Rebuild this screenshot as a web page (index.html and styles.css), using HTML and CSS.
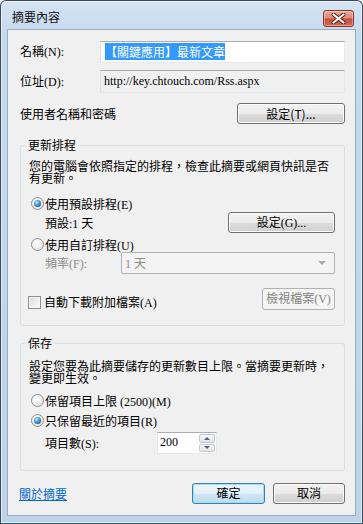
FILE: index.html
```html
<!DOCTYPE html>
<html lang="zh-Hant">
<head>
<meta charset="utf-8">
<title>摘要內容</title>
<link rel="stylesheet" href="styles.css">
</head>
<body>
<div class="window">
  <div class="titlebar">
    <span class="title">摘要內容</span>
    <span class="close" aria-label="關閉">
      <svg width="15" height="11" viewBox="0 0 15 11"><path d="M2.5 1.5 L12.5 9.5 M12.5 1.5 L2.5 9.5" stroke="#5a1c12" stroke-width="4" stroke-linecap="round"/><path d="M2.5 1.5 L12.5 9.5 M12.5 1.5 L2.5 9.5" stroke="#ffffff" stroke-width="2.2" stroke-linecap="round"/></svg>
    </span>
  </div>
  <div class="client">
    <div class="form-row row-name">
      <span class="lbl">名稱(N):</span>
      <div class="textbox"><span class="sel">【關鍵應用】最新文章</span></div>
    </div>
    <div class="form-row row-url">
      <span class="lbl">位址(D):</span>
      <div class="textbox readonly">http://key.chtouch.com/Rss.aspx</div>
    </div>
    <div class="user-row">
      <span>使用者名稱和密碼</span>
      <span class="btn btn-user">設定(T)...</span>
    </div>

    <fieldset class="group group-update">
      <legend>更新排程</legend>
      <p class="desc">您的電腦會依照指定的排程，檢查此摘要或網頁快訊是否有更新。</p>
      <div class="opt opt-first"><span class="radio on"></span><span>使用預設排程(E)</span></div>
      <div class="sub-row default-row">
        <span>預設:1 天</span>
        <span class="btn btn-g">設定(G)...</span>
      </div>
      <div class="opt opt-custom"><span class="radio"></span><span>使用自訂排程(U)</span></div>
      <div class="sub-row freq-row">
        <span class="freq-lbl disabled">頻率(F):</span>
        <div class="combo"><span class="disabled">1 天</span><span class="arrow"></span></div>
      </div>
      <div class="check-row">
        <div class="check-opt"><span class="checkbox"></span><span>自動下載附加檔案(A)</span></div>
        <span class="btn btn-disabled btn-view">檢視檔案(V)</span>
      </div>
    </fieldset>

    <fieldset class="group group-keep">
      <legend>保存</legend>
      <p class="desc">設定您要為此摘要儲存的更新數目上限。當摘要更新時，變更即生效。</p>
      <div class="opt opt-max"><span class="radio"></span><span>保留項目上限 (2500)(M)</span></div>
      <div class="opt opt-recent"><span class="radio on"></span><span>只保留最近的項目(R)</span></div>
      <div class="sub-row count-row">
        <span class="count-lbl">項目數(S):</span>
        <div class="spin">
          <span class="spin-val">200</span>
          <span class="spin-btns">
            <span class="spin-btn"><span class="tri-up"></span></span>
            <span class="spin-btn"><span class="tri-down"></span></span>
          </span>
        </div>
      </div>
    </fieldset>

    <div class="footer">
      <a class="link" href="#">關於摘要</a>
      <div class="footer-btns">
        <span class="btn btn-default btn-ok">確定</span>
        <span class="btn btn-cancel">取消</span>
      </div>
    </div>
  </div>
</div>
</body>
</html>
```

FILE: styles.css
```css
* { box-sizing: border-box; }

html, body {
  margin: 0;
  padding: 0;
  background: #ffffff;
}

body {
  font-family: "Liberation Serif", "Noto Sans CJK TC", serif;
  font-size: 12px;
  color: #000;
}

.window {
  width: 363px;
  height: 524px;
  border: 1px solid #3d4957;
  border-bottom-color: #2a5a6e;
  border-radius: 6px 6px 0 0;
  background: linear-gradient(to bottom, #d6e4f3 0, #c6daee 30px, #bdd3ea 100%);
  box-shadow: inset 0 0 0 1px rgba(255,255,255,0.55);
  display: flex;
  flex-direction: column;
}

.titlebar {
  height: 28px;
  display: flex;
  align-items: flex-start;
  padding: 8px 8px 0 11px;
}

.title {
  font-family: "Noto Sans CJK TC", sans-serif;
  font-size: 12px;
  line-height: 16px;
  color: #111;
}

.close {
  margin-left: auto;
  width: 31px;
  height: 17px;
  margin-top: 1px;
  border: 1px solid #8a3324;
  border-radius: 3px;
  background: linear-gradient(to bottom, #e9ab9c 0, #dc8b77 45%, #c8513a 55%, #d06a52 100%);
  box-shadow: inset 0 0 0 1px rgba(255,235,230,0.45);
  display: flex;
  align-items: center;
  justify-content: center;
}

.client {
  margin: 0 6px;
  height: 487px;
  border: 1px solid #9aabbf;
  background: #f0f0f0;
  padding: 0 10px 0 12px;
}

/* top form rows */
.form-row {
  display: grid;
  grid-template-columns: 80px 245px;
  align-items: center;
}
.row-name { margin-top: 11px; }
.row-url { margin-top: 7px; }

.lbl { line-height: 16px; }

.textbox {
  height: 22px;
  border: 1px solid #e3e9ef;
  border-top-color: #abadb3;
  border-left-color: #dbdfe6;
  background: #fff;
  padding: 2px 3px 0 4px;
  line-height: 16px;
  white-space: nowrap;
}
.textbox.readonly {
  background: #f0f0f0;
  height: 23px;
  padding-left: 3px;
}
.sel {
  background: #3399ff;
  color: #fff;
  font-family: "Noto Sans CJK TC", sans-serif;
}

.user-row {
  margin-top: 10px;
  display: flex;
  justify-content: space-between;
  align-items: center;
  font-family: "Noto Sans CJK TC", sans-serif;
}

/* buttons */
.btn {
  display: flex;
  align-items: center;
  justify-content: center;
  height: 21px;
  border: 1px solid #707070;
  border-radius: 3px;
  background: linear-gradient(to bottom, #f2f2f2 0, #ebebeb 50%, #dddddd 50%, #cfcfcf 100%);
  box-shadow: inset 0 0 0 1px #fcfcfc;
  line-height: 16px;
  white-space: nowrap;
}
.btn-user { width: 108px; }
.btn-g { width: 107px; }
.btn-disabled {
  border-color: #adb2b5;
  background: #f4f4f4;
  box-shadow: none;
  color: #838383;
}
.btn-view { width: 73px; height: 22px; }
.btn-default {
  border-color: #3c7fb1;
  box-shadow: inset 0 0 0 1px #9fdcf6;
  background: linear-gradient(to bottom, #eef6fb 0, #e1eff8 50%, #cfe6f4 50%, #bcdcef 100%);
}
.btn-ok { width: 73px; }
.btn-cancel { width: 72px; }

/* group boxes */
.group {
  margin: 0;
  min-width: 0;
  border: 1px solid #d5dfe5;
  border-radius: 3px;
  padding: 7px 9px 15px 8px;
}
.group legend {
  padding: 0 2px;
  margin-left: -3px;
  line-height: 16px;
  font-family: "Noto Sans CJK TC", sans-serif;
}
.group-update { margin-top: 13px; }
.group-keep { margin-top: 9px; padding-top: 9px; padding-bottom: 16px; }

.desc {
  margin: 0;
  line-height: 12px;
  font-family: "Noto Sans CJK TC", sans-serif;
}

.opt {
  display: flex;
  align-items: center;
  gap: 1px;
  height: 17px;
  padding-left: 2px;
}
.opt-first { margin-top: 11px; }
.opt-custom { margin-top: 4px; height: 15px; }
.opt-max { margin-top: 8px; }
.opt-recent { margin-top: 3px; }

.radio {
  position: relative;
  flex: none;
  width: 13px;
  height: 13px;
  border-radius: 50%;
  border: 1px solid #8e8f8f;
  background: radial-gradient(circle at 40% 35%, #ffffff 0, #ececec 55%, #d4d4d4 100%);
}
.radio.on::after {
  content: "";
  position: absolute;
  left: 2px;
  top: 2px;
  width: 7px;
  height: 7px;
  border-radius: 50%;
  background: radial-gradient(circle at 38% 35%, #c8ecff 0, #5fb2ee 30%, #1d67ad 70%, #123f73 100%);
}

.sub-row {
  display: flex;
  align-items: center;
  padding-left: 16px;
}
.default-row {
  height: 21px;
  justify-content: space-between;
}
.freq-row { height: 22px; }
.freq-lbl { width: 76px; }
.disabled { color: #8a8a8a; }

.combo {
  width: 214px;
  height: 22px;
  border: 1px solid #adb2b5;
  border-radius: 2px;
  background: #f4f4f4;
  display: flex;
  align-items: center;
  padding: 0 0 0 3px;
}
.arrow {
  margin-left: auto;
  margin-right: 8px;
  width: 0;
  height: 0;
  border-left: 4px solid transparent;
  border-right: 4px solid transparent;
  border-top: 4px solid #a9a9a9;
}

.check-row {
  margin-top: 14px;
  height: 22px;
  display: flex;
  justify-content: space-between;
}
.check-opt {
  align-self: flex-end;
  display: flex;
  align-items: center;
  gap: 3px;
  height: 16px;
  margin-left: -1px;
}
.checkbox {
  flex: none;
  width: 13px;
  height: 13px;
  border: 1px solid #8e8f8f;
  background: linear-gradient(135deg, #d9d9d9 0, #f0f0f0 60%, #fbfbfb 100%);
  box-shadow: inset 0 0 0 1px #f4f4f4;
}

.count-row { margin-top: 3px; height: 22px; }
.count-lbl { width: 112px; }

.spin {
  width: 60px;
  height: 22px;
  border: 1px solid #e3e9ef;
  border-top-color: #abadb3;
  background: #fff;
  display: flex;
}
.spin-val {
  flex: 1;
  padding: 1px 0 0 2px;
  line-height: 16px;
}
.spin-btns {
  width: 17px;
  display: flex;
  flex-direction: column;
  padding: 1px 1px 1px 0;
  gap: 1px;
}
.spin-btn {
  flex: 1;
  border: 1px solid #c2c7cc;
  border-radius: 2px;
  background: linear-gradient(to bottom, #f7f7f7, #e4e4e4);
  display: flex;
  align-items: center;
  justify-content: center;
}
.tri-up, .tri-down {
  width: 0;
  height: 0;
  border-left: 3px solid transparent;
  border-right: 3px solid transparent;
}
.tri-up { border-bottom: 3px solid #4d6185; }
.tri-down { border-top: 3px solid #4d6185; }

.footer {
  margin-top: 12px;
  display: flex;
  align-items: center;
  justify-content: space-between;
}
.link {
  margin-left: -1px;
  color: #0066cc;
  text-decoration: underline;
  font-family: "Noto Sans CJK TC", sans-serif;
}
.footer-btns {
  display: flex;
  gap: 8px;
}
```
